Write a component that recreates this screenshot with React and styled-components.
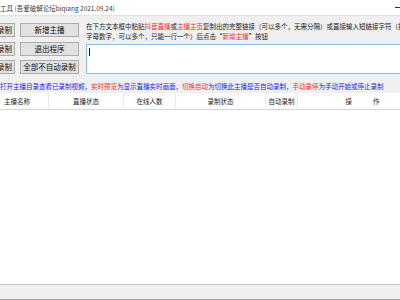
import React from "react";
import styled, { createGlobalStyle } from "styled-components";

const GlobalStyle = createGlobalStyle`
  html, body {
    margin: 0;
    padding: 0;
    overflow: hidden;
    background: #f0f0f0;
  }
  body {
    font-family: "Noto Sans CJK SC", "Noto Sans", sans-serif;
  }
  * {
    box-sizing: border-box;
  }
`;

const Window = styled.div`
  width: 400px;
  height: 300px;
  display: flex;
  flex-direction: column;
  overflow: hidden;
  background: #f0f0f0;
`;

const TitleBar = styled.div`
  height: 16px;
  flex: none;
  background: #ffffff;
  border-bottom: 1px solid #e2e2e2;
  display: flex;
  align-items: center;
  justify-content: space-between;
  font-size: 6.5px;
  color: #3a3a3a;
  white-space: nowrap;
`;

const Minimize = styled.span`
  width: 5px;
  height: 1px;
  background: #333;
  margin-top: -1px;
`;

const Top = styled.div`
  display: flex;
  align-items: flex-start;
  padding-top: 7px;
  height: 65px;
  flex: none;
`;

const ButtonGrid = styled.div`
  display: grid;
  grid-template-columns: 59px 59px;
  grid-auto-rows: 14px;
  column-gap: 5px;
  row-gap: 4.5px;
  margin-left: -44px;
  flex: none;
`;

const Button = styled.button`
  margin: 0;
  padding: 0;
  background: #e1e1e1;
  border: 1px solid #adadad;
  font-family: inherit;
  font-size: 7.5px;
  line-height: 12px;
  color: #111;
  white-space: nowrap;
  overflow: hidden;
  text-align: center;
  padding-left: ${(p) => (p.$shift ? p.$shift : 0)}px;
`;

const Info = styled.div`
  flex: 1;
  margin-left: 7px;
  margin-right: -80px;
  margin-top: -2px;
  display: flex;
  flex-direction: column;
`;

const Tip = styled.div`
  font-size: 6.5px;
  line-height: 10px;
  color: #222;
  white-space: nowrap;
`;

const Red = styled.span`
  color: #f52828;
`;

const Blue = styled.span`
  color: #2121e6;
`;

const Input = styled.div`
  margin-top: 3px;
  height: 30px;
  background: #ffffff;
  border: 1px solid #8cbbe8;
  position: relative;
`;

const Caret = styled.span`
  position: absolute;
  left: 2px;
  top: 3px;
  width: 1px;
  height: 8px;
  background: #222;
`;

const Hint = styled.div`
  font-size: 6.5px;
  line-height: 10px;
  white-space: nowrap;
  height: 12px;
  flex: none;
`;

const Table = styled.div`
  flex: 1;
  background: #ffffff;
  display: flex;
  flex-direction: column;
`;

const HeadRow = styled.div`
  display: flex;
  height: 17px;
  margin-left: -14px;
  border-bottom: 1px solid #d5d5d5;
  flex: none;
`;

const HeadCell = styled.div`
  width: ${(p) => p.$w}px;
  flex: none;
  font-size: 6.5px;
  line-height: 16px;
  color: #1a1a1a;
  text-align: center;
  white-space: nowrap;
  letter-spacing: ${(p) => p.$spread || 0}px;
  padding-left: ${(p) => p.$spread || 0}px;
  border-right: 1px solid #e8e8e8;
`;

const StatusBar = styled.div`
  height: 16px;
  flex: none;
  background: #efefef;
  border-top: 1px solid #cccccc;
  border-bottom: 1px solid #a3a3a3;
`;

const columns = [
  { label: "主播名称", w: 63 },
  { label: "直播状态", w: 75 },
  { label: "在线人数", w: 52 },
  { label: "录制状态", w: 90 },
  { label: "自动录制", w: 32 },
  { label: "操作", w: 130, spread: 21 },
];

export default function App() {
  return (
    <Window>
      <GlobalStyle />
      <TitleBar>
        <span>工具 (吾爱破解论坛biqiang 2021.09.24)</span>
        <Minimize />
      </TitleBar>
      <Top>
        <ButtonGrid>
          <Button $shift={8}>全部开始录制</Button>
          <Button>新增主播</Button>
          <Button $shift={8}>全部停止录制</Button>
          <Button>退出程序</Button>
          <Button $shift={8}>全部自动录制</Button>
          <Button>全部不自动录制</Button>
        </ButtonGrid>
        <Info>
          <Tip>
            在下方文本框中粘贴<Red>抖音直播</Red>或<Red>主播主页</Red>
            复制出的完整链接（可以多个，无需分隔）或直接输入短链接字符（抖音号或
          </Tip>
          <Tip>
            字母数字，可以多个，只能一行一个）后点击“<Red>新增主播</Red>”按钮
          </Tip>
          <Input>
            <Caret />
          </Input>
        </Info>
      </Top>
      <Hint>
        <Blue>打开主播目录查看已录制视频，</Blue>
        <Red>实时预览</Red>
        <Blue>为显示直播实时画面，</Blue>
        <Red>切换自动</Red>
        <Blue>为切换此主播是否自动录制，</Blue>
        <Red>手动录停</Red>
        <Blue>为手动开始或停止录制</Blue>
      </Hint>
      <Table>
        <HeadRow>
          {columns.map((c) => (
            <HeadCell key={c.label} $w={c.w} $spread={c.spread}>
              {c.label}
            </HeadCell>
          ))}
        </HeadRow>
      </Table>
      <StatusBar />
    </Window>
  );
}
